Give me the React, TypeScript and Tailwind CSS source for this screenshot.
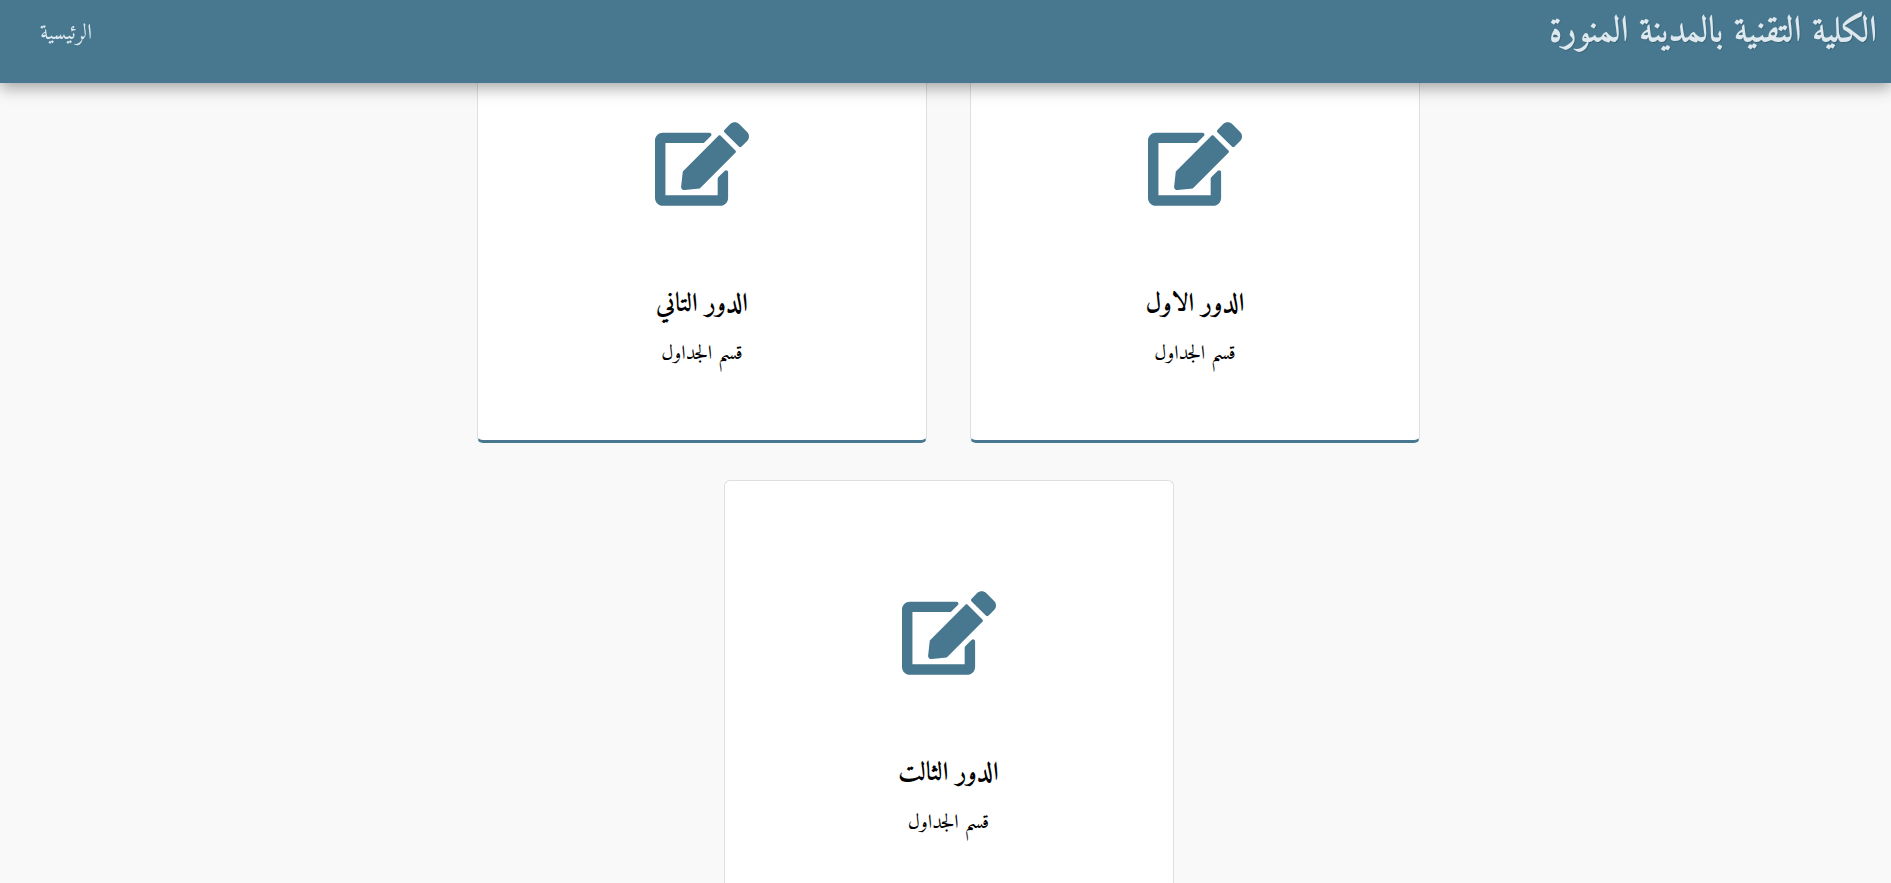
import { FaEdit } from "react-icons/fa";

const floors = [
  { title: "الدور الاول", section: "قسم الجداول" },
  { title: "الدور التاني", section: "قسم الجداول" },
  { title: "الدور الثالت", section: "قسم الجداول" },
];

function FloorCard({ title, section }: { title: string; section: string }) {
  return (
    <a
      href="#"
      className="flex h-[432px] w-full max-w-[450px] flex-col items-center rounded-md border border-b-[3px] border-[#dfdfdf] border-b-[#48788f] bg-white pt-[110px] text-black"
    >
      <FaEdit aria-hidden="true" className="h-[84px] w-[94px] text-[#48788f]" />
      <h2 className="mt-20 text-[26px] leading-[38px] font-bold">{title}</h2>
      <p className="mt-4 text-xl leading-[30px]">{section}</p>
    </a>
  );
}

export default function App() {
  return (
    <div
      dir="rtl"
      lang="ar"
      className="min-h-screen bg-[#f9f9f9] font-['Amiri','Arabic_Typesetting','DejaVu_Sans',serif]"
    >
      <header className="fixed inset-x-0 top-0 z-10 flex h-[83px] items-start justify-between bg-[#48788f] pr-3.5 pl-10 text-[#dde9ef] shadow-[0_5px_15px_rgba(0,0,0,0.35)] [font-feature-settings:'liga'_0,'calt'_0,'clig'_0,'rlig'_0,'ccmp'_0]">
        <h1 className="mt-1.5 text-[36px] leading-[54px] font-bold [text-shadow:1px_1px_1px_rgba(0,0,0,0.15)]">
          الكلية التقنية بالمدينة المنورة
        </h1>
        <nav className="mt-4">
          <a href="#" className="text-[22px] leading-9">
            الرئيسية
          </a>
        </nav>
      </header>
      <main className="mx-auto flex max-w-[1000px] flex-wrap justify-center gap-x-[43px] gap-y-[37px] pt-[11px] pb-10 pl-1.5">
        {floors.map((floor) => (
          <FloorCard key={floor.title} {...floor} />
        ))}
      </main>
    </div>
  );
}
